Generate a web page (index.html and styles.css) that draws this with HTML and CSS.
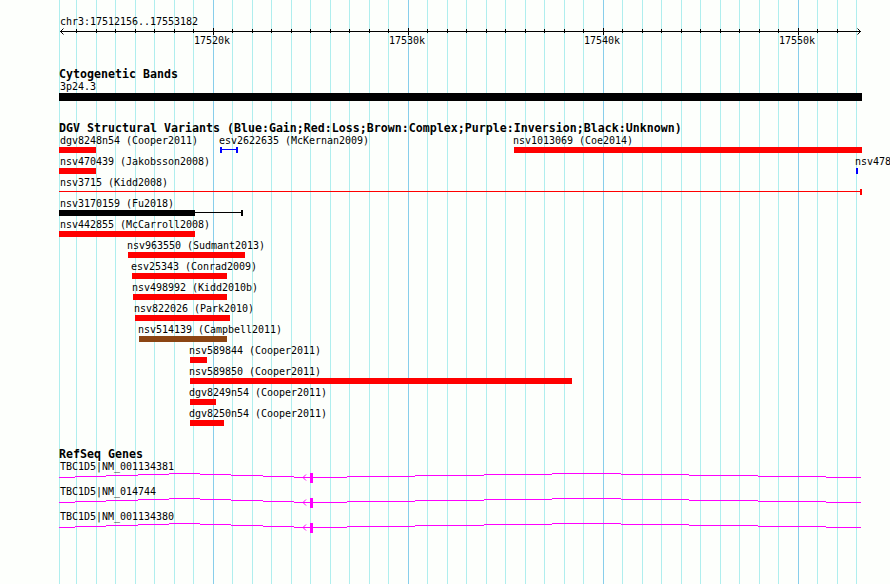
FILE: index.html
```html
<!DOCTYPE html>
<html lang="en">
<head>
  <meta charset="UTF-8" />
  <meta name="viewport" content="width=device-width, initial-scale=1.0"/>
  <title>chr3:17512156..17553182</title>
  <link rel="stylesheet" href="styles.css">
</head>
<body>

  <svg class="defs" width="0" height="0">
    <defs>
      <g id="transcript">
        <path d="M0 4.5h16M16 3.5h31M47 2.5h32M79 1.5h31M110 .5h31M141 1.5h31M172 2.5h32M204 3.5h31M235 4.5h16"/>
        <path d="M254 4.5h34M288 3.5h68M356 2.5h69M425 1.5h68M493 .5h69M562 1.5h68M630 2.5h69M699 3.5h68M767 4.5h35"/>
        <path class="strand" d="M247 1.5L244 4.5L247 7.5"/>
        <rect class="exon" x="251" y="0" width="3" height="10"/>
      </g>
    </defs>
  </svg>

  <main class="panel">

    <section class="ruler">
      <p class="label">chr3:17512156..17553182</p>
      <svg class="axis" width="803" height="7" viewBox="0 0 803 7">
        <defs>
          <pattern id="minor" x="17" width="39" height="7" patternUnits="userSpaceOnUse">
            <path d="M0 1h1v4h-1zM20 1h1v4h-1z"/>
          </pattern>
          <pattern id="major" x="154" width="195" height="7" patternUnits="userSpaceOnUse">
            <path d="M0 0h1v7h-1z"/>
          </pattern>
        </defs>
        <rect x="10" width="780" height="7" fill="url(#minor)"/>
        <rect x="10" width="780" height="7" fill="url(#major)"/>
        <path class="line" d="M1 3.5h801M4.5 .5L1.5 3.5L4.5 6.5M798.5 .5L801.5 3.5L798.5 6.5"/>
      </svg>
      <div class="ticks">
        <span>17520k</span>
        <span>17530k</span>
        <span>17540k</span>
        <span>17550k</span>
      </div>
    </section>

    <section class="bands">
      <h2>Cytogenetic Bands</h2>
      <p class="label">3p24.3</p>
      <div class="band"></div>
    </section>

    <section class="variants">
      <h2>DGV Structural Variants (Blue:Gain;Red:Loss;Brown:Complex;Purple:Inversion;Black:Unknown)</h2>
      <div class="row">
        <div class="feature loss clipped" style="--start: 0; --len: 37"><p class="label">dgv8248n54 (Cooper2011)</p><div class="bar"></div></div>
        <div class="feature gain" style="--start: 161; --len: 18"><p class="label">esv2622635 (McKernan2009)</p><div class="span both"></div></div>
        <div class="feature loss" style="--start: 455; --len: 348"><p class="label">nsv1013069 (Coe2014)</p><div class="bar"></div></div>
      </div>
      <div class="row">
        <div class="feature loss clipped" style="--start: 0; --len: 37"><p class="label">nsv470439 (Jakobsson2008)</p><div class="bar"></div></div>
        <div class="feature gain" style="--start: 797; --len: 2"><p class="label">nsv478</p><div class="bar"></div></div>
      </div>
      <div class="row">
        <div class="feature loss clipped" style="--start: 0; --len: 803"><p class="label">nsv3715 (Kidd2008)</p><div class="span"></div></div>
      </div>
      <div class="row">
        <div class="feature unknown clipped" style="--start: 0; --len: 184"><p class="label">nsv3170159 (Fu2018)</p><div class="span"><div class="bar core"></div></div></div>
      </div>
      <div class="row">
        <div class="feature loss clipped" style="--start: 0; --len: 136"><p class="label">nsv442855 (McCarroll2008)</p><div class="bar"></div></div>
      </div>
      <div class="row">
        <div class="feature loss" style="--start: 69; --len: 117"><p class="label">nsv963550 (Sudmant2013)</p><div class="bar"></div></div>
      </div>
      <div class="row">
        <div class="feature loss" style="--start: 73; --len: 95"><p class="label">esv25343 (Conrad2009)</p><div class="bar"></div></div>
      </div>
      <div class="row">
        <div class="feature loss" style="--start: 74; --len: 94"><p class="label">nsv498992 (Kidd2010b)</p><div class="bar"></div></div>
      </div>
      <div class="row">
        <div class="feature loss" style="--start: 76; --len: 95"><p class="label">nsv822026 (Park2010)</p><div class="bar"></div></div>
      </div>
      <div class="row">
        <div class="feature complex" style="--start: 80; --len: 88"><p class="label">nsv514139 (Campbell2011)</p><div class="bar"></div></div>
      </div>
      <div class="row">
        <div class="feature loss" style="--start: 131; --len: 17"><p class="label">nsv589844 (Cooper2011)</p><div class="bar"></div></div>
      </div>
      <div class="row">
        <div class="feature loss" style="--start: 131; --len: 382"><p class="label">nsv589850 (Cooper2011)</p><div class="bar"></div></div>
      </div>
      <div class="row">
        <div class="feature loss" style="--start: 131; --len: 26"><p class="label">dgv8249n54 (Cooper2011)</p><div class="bar"></div></div>
      </div>
      <div class="row">
        <div class="feature loss" style="--start: 131; --len: 34"><p class="label">dgv8250n54 (Cooper2011)</p><div class="bar"></div></div>
      </div>
    </section>

    <section class="genes">
      <h2>RefSeq Genes</h2>
      <div class="gene">
        <p class="label">TBC1D5|NM_001134381</p>
        <svg width="803" height="10"><use href="#transcript"/></svg>
      </div>
      <div class="gene">
        <p class="label">TBC1D5|NM_014744</p>
        <svg width="803" height="10"><use href="#transcript"/></svg>
      </div>
      <div class="gene">
        <p class="label">TBC1D5|NM_001134380</p>
        <svg width="803" height="10"><use href="#transcript"/></svg>
      </div>
    </section>

  </main>

</body>
</html>
```

FILE: styles.css
```css
:root {
  --bg-color: #fdfffc;
  --grid-minor: #afeeee;
  --grid-major: #87ceeb;
}

* {
  box-sizing: border-box;
}

body {
  margin: 0;
  background-color: var(--bg-color);
  color: black;
  font-family: "DejaVu Sans Mono", monospace;
  font-size: 10px;
  letter-spacing: -0.02px;
  overflow: hidden;
}

svg {
  display: block;
}

.defs {
  position: absolute;
}

/* one minor line per kb, one major line per 10 kb */
.panel {
  width: 802px;
  height: 100vh;
  margin-left: 59px;
  padding-top: 16px;
  background-image:
    linear-gradient(to right, var(--grid-major) 1px, transparent 1px),
    linear-gradient(to right, var(--grid-minor) 1px, transparent 1px),
    linear-gradient(to right, var(--grid-minor) 1px, transparent 1px),
    linear-gradient(to right, var(--grid-minor) 1px, transparent 1px);
  background-size: 195px 100%, 39px 100%, 39px 100%, 100% 100%;
  background-position: 154px 0, 17px 0, 37px 0, 0 0;
}

h2 {
  margin: 0;
  height: 12px;
  font-size: 11.6px;
  font-weight: bold;
  line-height: 10px;
  letter-spacing: 0.016px;
  white-space: nowrap;
}

.label {
  margin: 0 0 0 1px;
  height: 12px;
  line-height: 11px;
  white-space: nowrap;
}

.axis .line {
  fill: none;
  stroke: black;
}

.ticks {
  display: grid;
  grid-template-columns: repeat(4, 195px);
  margin-left: 135px;
  height: 12px;
  line-height: 12px;
}

.bands {
  margin-top: 22px;
}

.band {
  width: 803px;
  height: 8px;
  background-color: black;
}

.variants {
  margin-top: 22px;
}

/* features of one row share a cell and are shifted to their start */
.row {
  display: grid;
  height: 21px;
}

.feature {
  grid-area: 1 / 1;
  width: calc(var(--len) * 1px);
  margin-left: calc(var(--start) * 1px);
}

.feature .label {
  margin-left: -1px;
}

.clipped .label {
  margin-left: 1px;
}

.loss {
  color: red;
}

.gain {
  color: blue;
}

.complex {
  color: #8b4513;
}

.feature .label {
  color: black;
}

.bar,
.span {
  height: 6px;
}

.bar {
  background-color: currentColor;
}

.span {
  border-right: 2px solid;
  background: linear-gradient(currentColor, currentColor) 0 2px / 100% 1px no-repeat;
}

.both {
  border-left: 2px solid;
}

.core {
  width: 136px;
}

.genes {
  margin-top: 20px;
}

.gene {
  height: 25px;
}

.gene svg {
  fill: none;
  stroke: magenta;
}

.exon {
  fill: magenta;
  stroke: none;
}
```
